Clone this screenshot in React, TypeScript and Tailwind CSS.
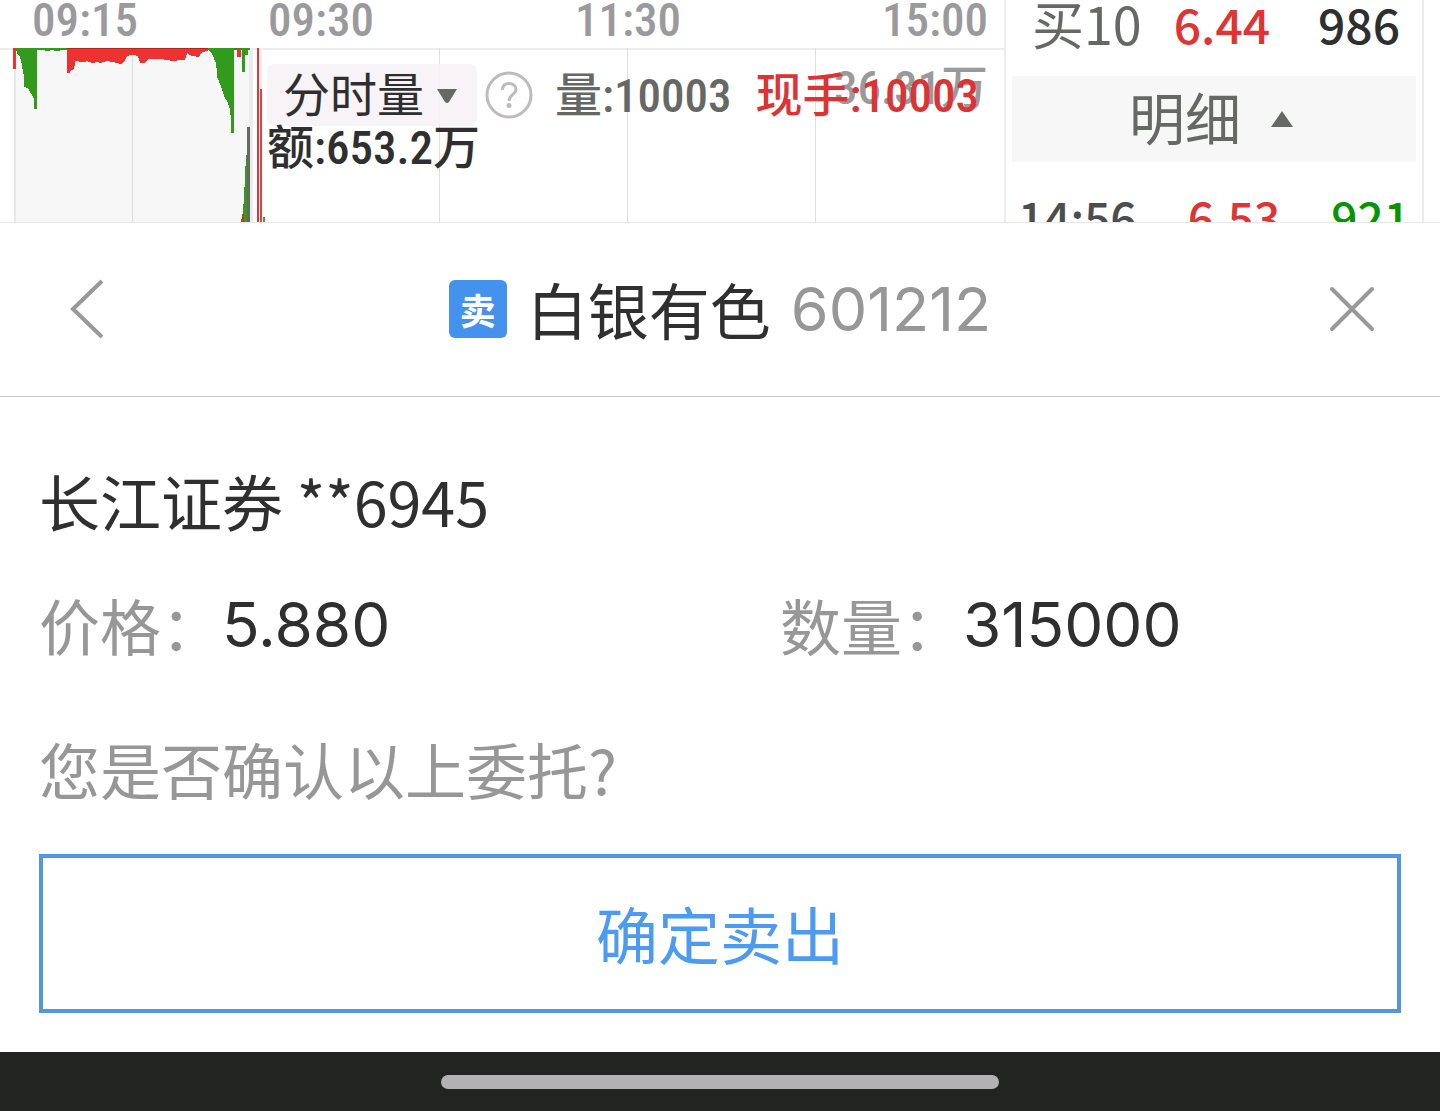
import type { ReactNode } from 'react';

const cjk = "font-['Noto_Sans_CJK_SC',sans-serif]";
const numeric = "font-['Roboto_Condensed','Noto_Sans_CJK_SC',sans-serif]";

function VolumeChart() {
  return (
    <svg
      className="absolute inset-0 h-full w-full"
      viewBox="0 0 1004 174"
      preserveAspectRatio="none"
      shapeRendering="crispEdges"
      aria-hidden="true"
    >
      <rect x="15" y="0" width="234" height="174" fill="#f7f7f7" />
      <rect x="0" y="0" width="1004" height="2" fill="#ededed" />
      <rect x="14" y="0" width="2" height="174" fill="#ebe7e8" />
      <rect x="249" y="0" width="4" height="174" fill="#ececec" />
      {[132, 439, 627, 815].map((x) => (
        <rect key={x} x={x} y="0" width="1" height="174" fill="#dedede" />
      ))}

      {/* call auction imbalance, hanging from the top */}
      <rect x="14" y="0" width="236" height="2" fill="#4f7d1e" />
      <rect x="13" y="0" width="3" height="21" fill="#ee3232" />
      <path
        d="M16 0L17 6L20 9L21 12L22 18L24 28L24.500 39L28 40L30 44L32 47L33.500 50V61H36.500V0Z"
        fill="#329b1c"
      />
      <path d="M36 0H69V2H60V3H54V2H50V3H45V2H36Z" fill="#329b1c" />
      <path
        d="M67 0V24.500H70L71 22L74 21L75.500 13L78 12.500L80 14L85 14L87 13L92 15L97 14L100 15L107 13L113 14L121 16L125 12L127 8L132 6.500L138 8L140 14.500L144 15L149 10.500L155 11L160 10.500L166 12L173 13L180 12L185 12L187 5L192 8L199 9L202 4L208 3V0Z"
        fill="#ee3232"
      />
      <path
        d="M208 0V2L212 6L216 15L217.500 30L221 38L224 48L227.500 54L230 62L231 72V85H234V0Z"
        fill="#329b1c"
      />
      <rect x="67" y="0" width="141" height="1" fill="#b3261c" />
      <path d="M237 2H241V9H237Z" fill="#ee3232" />
      <path d="M242 0H250V2H248V7H245V24H242Z" fill="#329b1c" />

      <path d="M241 174L243 164L244.500 139L246 107H247.500V174Z" fill="#329b1c" />
      <path d="M242 174V168L244 165V174Z" fill="#c0392b" />
      <rect x="247" y="79" width="3" height="95" fill="#666" />

      <rect x="257" y="0" width="5" height="174" fill="#fbe9e9" />
      <rect x="257" y="0" width="2" height="174" fill="#c9403f" />
      <rect x="260" y="41" width="2" height="133" fill="#d94444" />
      <rect x="263" y="169" width="2" height="5" fill="#5a8f3c" />
    </svg>
  );
}

function TimeAxis() {
  return (
    <div className={`flex h-12 text-[47px] leading-10 font-medium text-[#9a9a9c] ${numeric}`}>
      <span className="w-[268px] pl-8">09:15</span>
      <div className="flex flex-1 justify-between pr-4">
        <span>09:30</span>
        <span>11:30</span>
        <span>15:00</span>
      </div>
    </div>
  );
}

function ChartPane() {
  return (
    <div className="flex min-w-0 flex-1 flex-col">
      <TimeAxis />
      <div className={`relative flex-1 pt-4 pl-[267px] text-[47px] font-medium ${numeric}`}>
        <VolumeChart />
        <span className="absolute top-3 right-4 leading-14 text-[#9a9a9c]">36.31万</span>
        <div className="relative flex items-center whitespace-nowrap">
          <button className="flex h-[62px] w-[210px] shrink-0 items-center gap-3 rounded-lg bg-[#f6f2f6]/90 pt-0.5 pl-4 font-normal text-[#2f2f2f]">
            分时量
            <svg className="h-4 w-[22px]" viewBox="0 0 22 16" aria-hidden="true">
              <path d="M1 1H21L13 14Q11 16 9 14Z" fill="#666865" />
            </svg>
          </button>
          <button aria-label="说明" className="ml-2 shrink-0">
            <svg className="h-12 w-12" viewBox="0 0 48 48" fill="none" stroke="#bdbbbc" strokeWidth="3" aria-hidden="true">
              <circle cx="24" cy="24" r="22" />
              <path d="M17.500 19C17.500 14.500 20 12.500 24 12.500S31 15 31 18.500C31 23.500 24 23.500 24 30" />
              <circle cx="24" cy="34.500" r="2.500" fill="#bdbbbc" stroke="none" />
            </svg>
          </button>
          <span className="ml-[22px] pt-0.5 leading-14 text-[#666865]">量:10003</span>
          <span className="ml-6 pt-0.5 leading-14 text-[#dc3436]">现手:10003</span>
        </div>
        <div className="relative leading-11 text-[#2f2f2f]">额:653.2万</div>
      </div>
    </div>
  );
}

function QuotePane() {
  return (
    <div className={`mr-4 w-[420px] border-x-2 border-[#ececec] px-1.5 ${cjk}`}>
      <div className="flex h-[76px] pr-4 pl-5 text-[48px] leading-[46px] font-medium">
        <span className="text-[52px] font-normal text-[#666865]">买10</span>
        <span className="ml-8 text-[#e03333]">6.44</span>
        <span className="ml-auto text-[#2f2f2f]">986</span>
      </div>
      <button className="flex h-[86px] w-full items-center justify-center gap-[30px] bg-[#f7f7f7] pr-1.5 text-[56px] text-[#666865]">
        <span className="pb-1.5">明细</span>
        <svg className="h-4 w-[22px]" viewBox="0 0 22 16" aria-hidden="true">
          <path d="M11 0L22 16H0Z" fill="#666865" />
        </svg>
      </button>
      <div className="flex justify-between px-1.5 pt-6 text-[46px] leading-[60px] font-medium">
        <span className="text-[#4d4d4d]">14:56</span>
        <span className="text-[#e03333]">6.53</span>
        <span className="text-[#079307]">921</span>
      </div>
    </div>
  );
}

function Field({ label, children }: { label: string; children: ReactNode }) {
  return (
    <div className="flex items-center">
      <dt className="text-[#969796]">{label}</dt>
      <dd className="font-['Inter',sans-serif] text-[62px] text-[#2f2f2f]">{children}</dd>
    </div>
  );
}

export default function App() {
  return (
    <div className={`flex min-h-screen flex-col bg-white text-[#2f2f2f] ${cjk}`}>
      <div className="flex h-[223px] overflow-hidden border-b border-[#e9e9e9]">
        <ChartPane />
        <QuotePane />
      </div>

      <header className="flex items-center justify-between border-b border-[#c8cac8] px-16 pt-[46px] pb-[47px]">
        <button aria-label="返回">
          <svg className="h-16 w-12" viewBox="0 0 48 64" fill="none" stroke="#999" strokeWidth="4" aria-hidden="true">
            <path d="M38 4L9 32L38 60" />
          </svg>
        </button>
        <h1 className="flex items-center text-[61px] leading-20">
          <span className="flex size-[58px] items-center justify-center rounded-md bg-[#4491ee] text-[36px] font-bold text-white">卖</span>
          <span className="ml-5">白银有色</span>
          <span className="ml-5 font-['Inter',sans-serif] text-[#969796]">601212</span>
        </h1>
        <button aria-label="关闭">
          <svg className="h-12 w-12" viewBox="0 0 48 48" fill="none" stroke="#999" strokeWidth="4" strokeLinecap="round" aria-hidden="true">
            <path d="M4 4L44 44M44 4L4 44" />
          </svg>
        </button>
      </header>

      <main className="flex-1 px-[39px] pt-16 pb-[39px] text-[61px] leading-20">
        <p>长江证券 **6945</p>
        <dl className="mt-11 grid grid-cols-2 gap-30">
          <Field label="价格：">5.880</Field>
          <Field label="数量：">315000</Field>
        </dl>
        <p className="mt-16 text-[#969796]">您是否确认以上委托?</p>
        <button className="mt-[45px] w-full border-4 border-[#5296e0] py-9 text-[62px] leading-[79px] text-[#4d9af2]">确定卖出</button>
      </main>

      <footer className="flex justify-center bg-[#222422] pt-[23px] pb-[22px]">
        <div className="h-3.5 w-[558px] rounded-full bg-[#b4b1b5]" />
      </footer>
    </div>
  );
}
